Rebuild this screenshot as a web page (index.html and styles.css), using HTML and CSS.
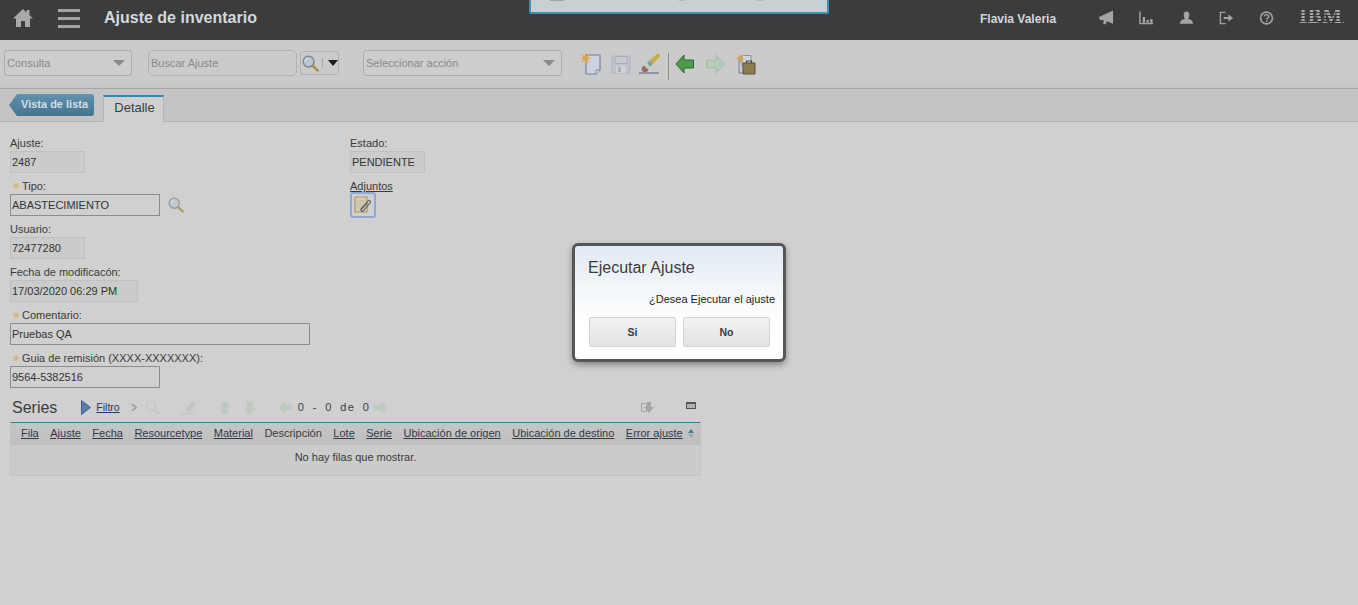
FILE: index.html
```html
<!DOCTYPE html>
<html lang="es">
<head>
    <meta charset="UTF-8">
    <title>Ajuste de inventario</title>
    <link rel="stylesheet" href="styles.css">
</head>
<body>
    <svg class="defs" width="0" height="0">
        <symbol id="arrow" viewBox="0 0 20 20">
            <path d="M1 10 9 1v5h9.500v8H9v5z"/>
        </symbol>
        <symbol id="lens" viewBox="0 0 18 18">
            <circle cx="7" cy="7" r="5.700" fill="#b8c8d6" stroke="#7f8789" stroke-width="1.500"/>
            <path d="M3.500 6.500a3.500 3.500 0 0 1 3-3" fill="none" stroke="#e2e9ee" stroke-width="1.300"/>
            <path d="m11.500 11.500 5 4.800" stroke="#a68a4e" stroke-width="2.800" stroke-linecap="round"/>
        </symbol>
        <symbol id="spark" viewBox="0 0 10 10">
            <path d="M5 0v10M0 5h10M1.500 1.500l7 7M8.500 1.500l-7 7" stroke="#d9a95c" stroke-width="1"/>
            <circle cx="5" cy="5" r="2.500" fill="#d9a64c"/>
        </symbol>
    </svg>

    <div class="top-dialog">
        <i class="top-mark"></i><i class="top-dot dot-a"></i><i class="top-dot dot-b"></i>
    </div>

    <header class="topbar">
        <svg class="ic-home" width="20" height="18" viewBox="0 0 20 18"><path d="M10 0 0 9.500h3V18h5v-6h4v6h5V9.500h3l-3.500-3.300V1h-3v2.400z" fill="#a9a9a9"/></svg>
        <div class="burger"><span></span><span></span><span></span></div>
        <div class="page-title">Ajuste de inventario</div>
        <div class="user-name">Flavia Valeria</div>
        <div class="top-icons">
            <svg width="15" height="16" viewBox="0 0 16 16"><path d="M0 7 15 0v14L8 11.500 7.500 15l-3-1 .5-3.500L1 10z" fill="#a3a3a3"/></svg>
            <svg width="15" height="16" viewBox="0 0 16 16"><path d="M1 1v13h14" fill="none" stroke="#a3a3a3" stroke-width="1.500"/><path d="M4 7h2.500v6H4zM8 10h2.500v3H8zM12 9h2.500v4H12z" fill="#a3a3a3"/></svg>
            <svg width="15" height="16" viewBox="0 0 16 16"><path d="M8 1c2 0 3 1.500 3 3.500S10 8 9.800 9c2.700.6 5 1.500 5.200 5H1c.2-3.500 2.500-4.400 5.200-5C6 8 5 6.500 5 4.500S6 1 8 1z" fill="#a3a3a3"/></svg>
            <svg width="15" height="16" viewBox="0 0 16 16"><path d="M7 2H1.500v12H7" fill="none" stroke="#a3a3a3" stroke-width="1.500"/><path d="M5 7h5V4l5 4-5 4V9H5z" fill="#a3a3a3"/></svg>
            <svg width="15" height="16" viewBox="0 0 16 16"><circle cx="8" cy="8" r="6.300" fill="none" stroke="#a3a3a3" stroke-width="1.700"/><path d="M5.800 6.200C6 4.800 7 4.400 8 4.400c1.300 0 2.300.7 2.300 1.900 0 1.600-2 1.600-2 3.200" fill="none" stroke="#a3a3a3" stroke-width="1.500"/><path d="M7.400 10.500h1.700v1.600H7.400z" fill="#a3a3a3"/></svg>
        </div>
        <div class="ibm">IBM<small>.</small></div>
    </header>

    <div class="toolbar">
        <div class="select sel-query"><span>Consulta</span><b class="caret"></b></div>
        <div class="search-box">Buscar Ajuste</div>
        <div class="search-btn">
            <svg width="17" height="17"><use href="#lens"/></svg>
            <em></em>
            <b class="caret dark"></b>
        </div>
        <div class="select sel-action"><span>Seleccionar acción</span><b class="caret"></b></div>
        <div class="tool-icons">
            <svg class="t-new" width="22" height="22" viewBox="0 0 22 22">
                <path d="M6 2h14v15l-4 4H6z" fill="#ccd3df" stroke="#76809f" stroke-width="1.200"/>
                <path d="M16 21v-4h4" fill="#e8e8e8" stroke="#76809f"/>
                <use href="#spark" x="0" y="0" width="11" height="11"/>
            </svg>
            <svg class="t-save" width="20" height="20" viewBox="0 0 20 20">
                <path d="M1 2h18v17H1z" fill="#bcc3d0" stroke="#adb4c4"/>
                <path d="M4 2.500h12v7H4z" fill="#c6c9cf" stroke="#a9afbc"/>
                <path d="M5 12h10v7H5z" fill="#d0d2d6"/>
                <path d="M7 13h3v5H7z" fill="#a5acbc"/>
            </svg>
            <svg class="t-brush" width="22" height="22" viewBox="0 0 22 22">
                <path d="M1 20h20" stroke="#6d7391" stroke-width="1.300"/>
                <path d="m12 7 8-7 2 3-7 8z" fill="#c9ab45"/>
                <path d="m9 10 3-3 3 4-3 3z" fill="#7ba596"/>
                <circle cx="7" cy="16" r="3.300" fill="#a06a5e"/>
                <path d="m6 12 3-2 3 4-3 2z" fill="#c7cbc3"/>
            </svg>
            <i class="tool-sep"></i>
            <svg class="t-back" width="20" height="20"><use href="#arrow" fill="#4f9a50" stroke="#256f2b"/></svg>
            <svg class="t-next" width="20" height="20"><use href="#arrow" class="flip" fill="#b7cbb8" stroke="#a6bca8"/></svg>
            <svg class="t-case" width="20" height="21" viewBox="0 0 20 21">
                <path d="M3 3h10v16H3z" fill="#c5cad6" stroke="#76809f"/>
                <path d="M6 1.500h9V12H6z" fill="#d3d7de" stroke="#8b93a9"/>
                <path d="M7 9h12v11H7z" fill="#8d7b51" stroke="#5d5236"/>
                <path d="M10.500 9V7h5v2" fill="none" stroke="#4c452f" stroke-width="1.200"/>
                <use href="#spark" x="0" y="0" width="9" height="9"/>
            </svg>
        </div>
    </div>

    <div class="tabbar">
        <a class="back-btn">Vista de lista</a>
        <div class="tab">Detalle</div>
    </div>

    <main class="content">
        <div class="form">
            <div class="col">
                <div class="field">
                    <label>Ajuste:</label>
                    <div class="box ro w75">2487</div>
                </div>
                <div class="field">
                    <label><svg class="req" width="8" height="8"><use href="#spark"/></svg>Tipo:</label>
                    <div class="with-icon">
                        <div class="box w150">ABASTECIMIENTO</div>
                        <svg class="lookup" width="16" height="16"><use href="#lens"/></svg>
                    </div>
                </div>
                <div class="field">
                    <label>Usuario:</label>
                    <div class="box ro w75">72477280</div>
                </div>
                <div class="field">
                    <label>Fecha de modificacón:</label>
                    <div class="box ro w128">17/03/2020 06:29 PM</div>
                </div>
                <div class="field">
                    <label><svg class="req" width="8" height="8"><use href="#spark"/></svg>Comentario:</label>
                    <div class="box w300">Pruebas QA</div>
                </div>
                <div class="field">
                    <label><svg class="req" width="8" height="8"><use href="#spark"/></svg>Guia de remisión (XXXX-XXXXXXX):</label>
                    <div class="box w150">9564-5382516</div>
                </div>
            </div>
            <div class="col">
                <div class="field">
                    <label>Estado:</label>
                    <div class="box ro w75">PENDIENTE</div>
                </div>
                <div class="field">
                    <label class="attach-label">Adjuntos</label>
                    <div class="attach-btn">
                        <svg width="18" height="18" viewBox="0 0 18 18">
                            <path d="M1 1h12v15H1z" fill="#d0cdbf" stroke="#bb9448" stroke-width="1.200"/>
                            <path d="M3 5h8M3 8h6M3 11h5" stroke="#c7b68e"/>
                            <path d="m6 14 8-9c1.500-1.500 3.500.5 2 2l-7 8c-1 1-2.500-.3-1.500-1.500l6-7" fill="none" stroke="#666" stroke-width="1.100"/>
                        </svg>
                    </div>
                </div>
            </div>
        </div>

        <section class="series">
            <div class="series-bar">
                <h2>Series</h2>
                <svg class="s-play" width="10" height="15" viewBox="0 0 10 15"><path d="M.500.500 9.500 7.500.500 14.500z" fill="#5c7cab" stroke="#3f5f92"/></svg>
                <a class="filter-link">Filtro</a>
                <svg class="s-chev" width="7" height="9" viewBox="0 0 7 9"><path d="m1 1 4 3.500L1 8" fill="none" stroke="#9a9a9a" stroke-width="1.600"/></svg>
                <svg class="s-find" width="15" height="15" viewBox="0 0 18 18"><circle cx="7" cy="7" r="5.500" fill="none" stroke="#c4c4c4" stroke-width="1.500"/><path d="m11 11 6 6" stroke="#c4c4c4" stroke-width="2.500"/></svg>
                <svg class="s-erase" width="17" height="15" viewBox="0 0 17 15"><path d="m5 10 7-9 4 3-7 9z" fill="#c4c6c4"/><path d="M0 14h14" stroke="#c0c0c0"/></svg>
                <svg class="s-up" width="15" height="15"><use href="#arrow" class="rot-up" fill="#bfc9bf"/></svg>
                <svg class="s-down" width="15" height="15"><use href="#arrow" class="rot-down" fill="#bfc9bf"/></svg>
                <svg class="s-prev" width="15" height="15"><use href="#arrow" fill="#bfc9bf"/></svg>
                <span class="pager">0 - 0 de 0</span>
                <svg class="s-next" width="15" height="15"><use href="#arrow" class="flip" fill="#bfc9bf"/></svg>
                <svg class="s-export" width="13" height="11" viewBox="0 0 13 11"><path d="M.500 1.500h5v8h-5z" fill="none" stroke="#a6a6a6"/><path d="M6 0h4v5h3L8 11 3 5h3z" fill="#a6a6a6"/></svg>
                <div class="s-min"></div>
            </div>
            <div class="grid">
                <div class="grid-head">
                    <a class="col-fila">Fila</a>
                    <a>Ajuste</a>
                    <a>Fecha</a>
                    <a>Resourcetype</a>
                    <a>Material</a>
                    <span>Descripción</span>
                    <a>Lote</a>
                    <a>Serie</a>
                    <a>Ubicación de origen</a>
                    <a>Ubicación de destino</a>
                    <a>Error ajuste</a>
                    <div class="sort"><i class="sort-up"></i><i class="sort-down"></i></div>
                </div>
                <div class="grid-empty">No hay filas que mostrar.</div>
            </div>
        </section>
    </main>

    <div class="modal">
        <h3>Ejecutar Ajuste</h3>
        <p>¿Desea Ejecutar el ajuste</p>
        <div class="modal-btns">
            <button>Si</button>
            <button>No</button>
        </div>
    </div>
</body>
</html>
```

FILE: styles.css
```css
html,body{
    margin:0px;
    padding:0px;
}
body{
    height:100vh;
    overflow:hidden;
    background-color:#d0d0d0;
    font-family:"Liberation Sans",Arial,sans-serif;
    font-size:11px;
    color:#3a3a3a;
    position:relative;
}
.defs{
    position:absolute;
}
.flip{
    transform:rotate(180deg);
    transform-origin:center;
}
.rot-up{
    transform:rotate(90deg);
    transform-origin:center;
}
.rot-down{
    transform:rotate(-90deg);
    transform-origin:center;
}

/* dialog behind the mask, mostly off the top of the page */
.top-dialog{
    position:absolute;
    left:529px;
    top:-10px;
    width:296px;
    height:20px;
    background-color:#c7d0d3;
    border:2px solid #3f8db3;
    border-radius:2px;
    z-index:2;
}
.top-mark{
    position:absolute;
    left:19px;
    top:8px;
    width:14px;
    height:1px;
    background-color:#a0a4a6;
}
.top-dot{
    position:absolute;
    top:8px;
    width:6px;
    height:1px;
    background-color:#aeb5b8;
}
.dot-a{
    left:148px;
}
.dot-b{
    left:226px;
}

/* header */
.topbar{
    height:40px;
    background-color:#3c3c3c;
    display:flex;
    align-items:center;
    padding:0 0 4px 13px;
    box-sizing:border-box;
}
.ic-home{
    margin-right:25px;
}
.burger{
    display:flex;
    flex-direction:column;
    gap:5px;
    width:22px;
    margin-right:24px;
}
.burger>span{
    display:block;
    height:3px;
    background-color:#a3a3a3;
}
.page-title{
    font-size:16px;
    font-weight:bold;
    color:#d2d8dc;
    width:876px;
}
.user-name{
    font-size:12px;
    font-weight:bold;
    color:#d2d8dc;
    width:119px;
    padding-top:1px;
}
.top-icons{
    display:flex;
    gap:25px;
    width:200px;
}
.ibm{
    font-family:"Liberation Serif",serif;
    font-size:21px;
    font-weight:bold;
    letter-spacing:0.5px;
    line-height:18px;
    color:transparent;
    background:repeating-linear-gradient(#a8a8a8 0,#a8a8a8 2px,#3c3c3c 2px,#3c3c3c 3px);
    -webkit-background-clip:text;
    background-clip:text;
}
.ibm>small{
    font-size:8px;
}

/* toolbar */
.toolbar{
    height:38px;
    padding-top:10px;
    padding-left:4px;
    display:flex;
    align-items:flex-start;
    background:linear-gradient(#cbcbcb 43px,#c6c6c6 43px);
    border-bottom:1px solid #a6a6a6;
}
.select{
    height:24px;
    border:1px solid #adadad;
    border-radius:3px;
    background-color:#cdcdcd;
    color:#8a8a8a;
    display:flex;
    align-items:center;
    justify-content:space-between;
    padding:0 6px 0 2px;
}
.sel-query{
    width:118px;
    margin-right:16px;
}
.sel-action{
    width:189px;
    margin-right:18px;
}
.caret{
    width:0;
    height:0;
    border-left:6px solid transparent;
    border-right:6px solid transparent;
    border-top:6px solid #8a8a8a;
}
.caret.dark{
    border-left-width:5px;
    border-right-width:5px;
    border-top-color:#1c1c1c;
}
.search-box{
    width:145px;
    height:24px;
    line-height:24px;
    padding-left:2px;
    border:1px solid #b2b2b2;
    border-radius:5px;
    color:#8a8a8a;
    margin-right:3px;
}
.search-btn{
    width:36px;
    height:22px;
    margin:1px 24px 0 0;
    border:1px solid #b2b2b2;
    border-radius:3px;
    display:flex;
    align-items:center;
    padding-left:1px;
}
.search-btn>em{
    display:block;
    width:1px;
    height:8px;
    margin:0 4px 0 3px;
    border-left:1px dotted #8f8f8f;
}
.tool-icons{
    display:flex;
    align-items:center;
    height:30px;
    margin-top:-1px;
}
.t-new{
    margin-right:9px;
}
.t-save{
    margin-right:7px;
}
.t-brush{
    margin-right:8px;
}
.tool-sep{
    display:block;
    width:1px;
    height:27px;
    margin:4px 6px 0 0;
    background-color:#8f8c7c;
}
.t-back{
    margin-right:10px;
}
.t-next{
    margin-right:11px;
}

/* tabs */
.tabbar{
    height:33px;
    background-color:#c4c4c4;
    border-bottom:1px solid #b4b4b4;
    box-sizing:border-box;
    display:flex;
    align-items:flex-start;
    padding-left:9px;
}
.back-btn{
    display:block;
    margin:5px 9px 0 0;
    width:85px;
    height:22px;
    line-height:21px;
    box-sizing:border-box;
    padding-left:12px;
    font-weight:bold;
    color:#d5dee3;
    background:linear-gradient(#5f93ae,#45748f);
    border-radius:0 3px 3px 0;
    clip-path:polygon(0 50%,8px 0,100% 0,100% 100%,8px 100%);
}
.tab{
    margin-top:6px;
    height:27px;
    width:61px;
    box-sizing:border-box;
    background-color:#d0d0d0;
    border-top:2px solid #2f8ab5;
    border-left:1px solid #b4b4b4;
    border-right:1px solid #b4b4b4;
    padding-left:2px;
    text-align:center;
    font-size:13px;
    line-height:22px;
    color:#333f4c;
}

/* form */
.content{
    padding:8px 0 0 10px;
}
.form{
    display:grid;
    grid-template-columns:340px 1fr;
}
.field>label{
    display:block;
    height:21px;
    padding-top:6px;
    box-sizing:border-box;
    line-height:14px;
    font-size:11px;
    color:#3a3a3a;
    white-space:nowrap;
}
.req{
    margin:0 2px;
    opacity:.7;
}
.box{
    height:22px;
    line-height:21px;
    box-sizing:border-box;
    padding-left:1px;
    border:1px solid #8c8c8c;
    font-size:11px;
    color:#333;
    white-space:nowrap;
}
.box.ro{
    border-color:#c0c0c0;
    background-color:#cbcbcb;
}
.w75{
    width:75px;
}
.w128{
    width:128px;
}
.w150{
    width:150px;
}
.w300{
    width:300px;
}
.with-icon{
    display:flex;
    align-items:center;
}
.lookup{
    margin-left:8px;
    opacity:.75;
}
.field>.attach-label{
    height:19px;
    padding-top:7px;
    text-decoration:underline;
    line-height:12px;
}
.attach-btn{
    width:26px;
    height:26px;
    box-sizing:border-box;
    border:2px solid #8ea9d3;
    border-radius:3px;
    display:flex;
    align-items:center;
    justify-content:center;
}

/* series grid */
.series{
    width:691px;
    margin-top:8px;
}
.series-bar{
    height:26px;
    box-sizing:border-box;
    display:flex;
    align-items:center;
    padding:0 0 4px 2px;
}
.series-bar>h2{
    margin:0 24px 0 0;
    padding-top:1px;
    font-size:16px;
    font-weight:normal;
    color:#3c3c3c;
}
.s-play{
    margin-right:5px;
}
.filter-link{
    font-size:10.500px;
    color:#24366a;
    text-decoration:underline;
    margin-right:11px;
}
.s-chev{
    margin-right:7px;
}
.s-find{
    margin-right:20px;
}
.s-erase{
    margin-right:20px;
}
.s-up{
    margin-right:10px;
}
.s-down{
    margin-right:21px;
}
.s-prev{
    margin-right:5px;
}
.pager{
    font-size:11px;
    letter-spacing:1.400px;
    white-space:pre;
    word-spacing:3px;
    color:#3c3c3c;
    margin-right:3px;
}
.s-next{
    margin-right:253px;
}
.s-export{
    margin-right:32px;
}
.s-min{
    width:10px;
    height:7px;
    box-sizing:border-box;
    border:1px solid #555;
    border-top-width:2px;
    background-color:#b0b0b0;
    margin-top:-4px;
}
.grid{
    border:1px solid #c4c4c4;
    border-top-color:#2f83a6;
}
.grid-head{
    height:22px;
    box-sizing:border-box;
    display:flex;
    align-items:center;
    gap:11.500px;
    padding:0 0 2px 10px;
    background:linear-gradient(#c6c6c6,#bebebe);
    white-space:nowrap;
    color:#3a3a3a;
}
.grid-head>a{
    text-decoration:underline;
    color:#2e3a4a;
}
.sort{
    display:flex;
    flex-direction:column;
    gap:1px;
    margin-left:-6px;
}
.sort>i{
    display:block;
    width:0;
    height:0;
    border-left:3px solid transparent;
    border-right:3px solid transparent;
}
.sort-up{
    border-bottom:4px solid #3d7c8e;
}
.sort-down{
    border-top:4px solid #a3a3a3;
}
.grid-empty{
    height:30px;
    line-height:24px;
    text-align:center;
    background-color:#cbcbcb;
    color:#3a3a3a;
    font-size:11px;
}

/* confirm */
.modal{
    position:absolute;
    left:572px;
    top:243px;
    width:214px;
    height:119px;
    box-sizing:border-box;
    padding:13px 13px 0 14px;
    border:3px solid #565656;
    border-radius:6px;
    background:linear-gradient(#e2eaf4 0,#ffffff 65%);
    box-shadow:0 3px 6px rgba(0,0,0,.35);
    z-index:3;
}
.modal>h3{
    margin:0 0 0 -1px;
    font-size:16px;
    font-weight:normal;
    color:#3c3c3c;
    line-height:18px;
}
.modal>p{
    margin:15px -5px 0 0;
    text-align:right;
    font-size:11px;
    line-height:14px;
    color:#222;
}
.modal-btns{
    display:flex;
    gap:7px;
    margin-top:11px;
}
.modal-btns>button{
    width:87px;
    height:30px;
    padding:0;
    border:1px solid #d4d4d4;
    border-radius:2px;
    background:linear-gradient(#f3f3f3,#e2e2e2);
    font-family:"Liberation Sans",Arial,sans-serif;
    font-size:10.500px;
    font-weight:bold;
    color:#3c3c3c;
}
```
